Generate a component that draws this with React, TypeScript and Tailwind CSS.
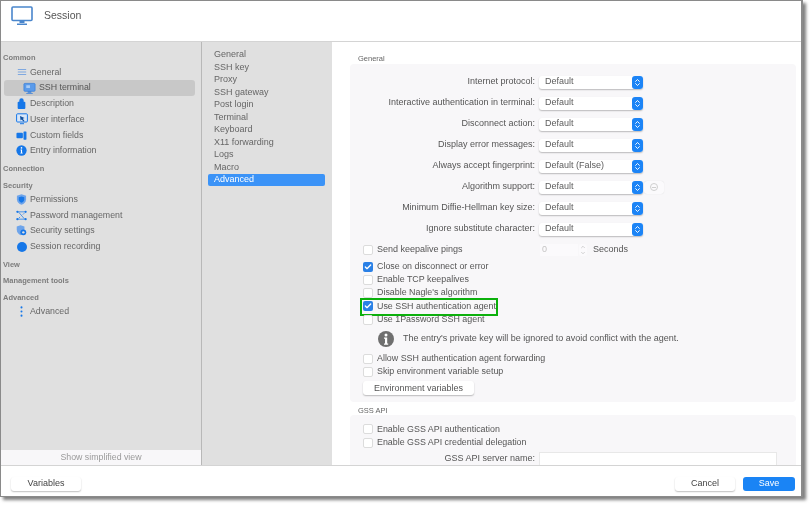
import { Check, ChevronDown, ChevronUp, ChevronsUpDown } from "lucide-react";
import type { ReactNode } from "react";

const BLUE = "#1677e8";

function MenuIcon() {
  return (
    <svg viewBox="0 0 12 12" className="w-[10px] h-[10px]" fill="none" stroke="#7fa8e0" strokeWidth="1.3">
      <path d="M1 3h10M1 6h10M1 9h10" />
    </svg>
  );
}

function TerminalIcon() {
  return (
    <svg viewBox="0 0 14 14" className="w-[13px] h-[13px]">
      <rect x="1" y="1.5" width="12" height="8.5" rx="1" fill="#5b9bea" stroke="#3a7fd8" strokeWidth="0.8" />
      <rect x="3.5" y="3.5" width="4" height="3" fill="#a9ccf5" />
      <path d="M5 10h4v1.5H5zM3.5 12h7v1h-7z" fill="#3a7fd8" />
    </svg>
  );
}

function DescriptionIcon() {
  return (
    <svg viewBox="0 0 12 12" className="w-[11px] h-[11px]" fill={BLUE}>
      <path d="M3.6 4V2.8a2.4 2.4 0 0 1 4.8 0V4h.8c.6 0 1 .4 1 1v6c0 .6-.4 1-1 1H2.8c-.6 0-1-.4-1-1V5c0-.6.4-1 1-1z" />
    </svg>
  );
}

function UiIcon() {
  return (
    <svg viewBox="0 0 12 12" className="w-[12px] h-[12px]">
      <rect x="0.6" y="0.8" width="10.8" height="8.2" rx="1" fill="#d8e6f8" stroke={BLUE} strokeWidth="1" />
      <path d="M4 3l4.5 2-1.7.7L8.5 8 7.3 8.6 5.8 6.4 4.6 7.6z" fill="#10509f" />
      <path d="M4 10.2h4v1H4z" fill={BLUE} />
    </svg>
  );
}

function FieldsIcon() {
  return (
    <svg viewBox="0 0 12 12" className="w-[11px] h-[11px]" fill={BLUE}>
      <rect x="0.5" y="3" width="7" height="6" rx="1" />
      <rect x="8.2" y="1.5" width="3.2" height="9" rx="0.6" />
    </svg>
  );
}

function InfoIcon() {
  return (
    <svg viewBox="0 0 12 12" className="w-[11px] h-[11px]">
      <circle cx="6" cy="6" r="5.6" fill={BLUE} />
      <circle cx="6" cy="3.2" r="0.9" fill="#fff" />
      <path d="M5 5h1.6v3.4h.7v.9H4.8v-.9h.6V5.9H5z" fill="#fff" />
    </svg>
  );
}

function ShieldIcon() {
  return (
    <svg viewBox="0 0 12 12" className="w-[11px] h-[11px]">
      <path d="M6 .4l5 1.6v3.6c0 3-2.2 5-5 6-2.8-1-5-3-5-6V2z" fill="#6ea4ea" />
      <path d="M6 2.6l3 1v2.2c0 1.9-1.3 3.1-3 3.8-1.7-.7-3-1.9-3-3.8V3.6z" fill={BLUE} />
    </svg>
  );
}

function PasswordIcon() {
  return (
    <svg viewBox="0 0 12 12" className="w-[11px] h-[11px]" fill={BLUE} stroke={BLUE}>
      <path d="M2 2h8M2 10h8M3 2.5l6 7M9 3.5L7.5 5M3 9l1.5-1.5" strokeWidth="0.8" fill="none" />
      <circle cx="1.5" cy="2" r="1.2" stroke="none" />
      <circle cx="10.5" cy="2" r="1.2" stroke="none" />
      <circle cx="1.5" cy="10" r="1.2" stroke="none" />
      <circle cx="10.5" cy="10" r="1.2" stroke="none" />
    </svg>
  );
}

function SecurityIcon() {
  return (
    <svg viewBox="0 0 12 12" className="w-[11px] h-[11px]">
      <path d="M5 .3l4.2 1.4v3.2c0 3-1.8 5.2-4.2 6.2C2.600 10.100.8 7.900.8 4.900V1.700z" fill="#6ea4ea" />
      <circle cx="8" cy="8" r="3.2" fill={BLUE} />
      <circle cx="8" cy="8" r="1.3" fill="#e0e0e0" />
    </svg>
  );
}

function RecordIcon() {
  return (
    <svg viewBox="0 0 12 12" className="w-[10px] h-[10px]">
      <circle cx="6" cy="6" r="6" fill={BLUE} />
    </svg>
  );
}

function DotsIcon() {
  return (
    <svg viewBox="0 0 12 12" className="w-[11px] h-[11px]" fill={BLUE}>
      <circle cx="6" cy="1.500" r="1.100" />
      <circle cx="6" cy="6" r="1.100" />
      <circle cx="6" cy="10.500" r="1.100" />
    </svg>
  );
}

function SideItem({ icon, label, selected }: { icon: ReactNode; label: string; selected?: boolean }) {
  return (
    <div className={selected ? "flex items-center h-[15.7px] ml-[3px] mr-[6px] pl-[19px] rounded-[3px] bg-[#c8c8c8]" : "flex items-center h-[15.7px] pl-[14px]"}>
      <span className="w-[13px] flex justify-center shrink-0">{icon}</span>
      <span className={selected ? "ml-[3px] text-[#555]" : "ml-[2px] text-[#666]"}>{label}</span>
    </div>
  );
}

function SideHeading({ label, first }: { label: string; first?: boolean }) {
  return (
    <div className={first ? "h-[13px] flex items-center pl-[2px] text-[7.500px] font-bold text-[#7c7c7c]" : "h-[13px] mt-[3.500px] flex items-center pl-[2px] text-[7.500px] font-bold text-[#7c7c7c]"}>
      {label}
    </div>
  );
}

function Sidebar() {
  return (
    <div className="w-[201px] shrink-0 flex flex-col bg-[#e0e0e0] border-r border-[#b8b8b8] text-[8.800px]">
      <div className="flex-1 pt-[9.500px]">
        <SideHeading first label="Common" />
        <SideItem icon={<MenuIcon />} label="General" />
        <SideItem selected icon={<TerminalIcon />} label="SSH terminal" />
        <SideItem icon={<DescriptionIcon />} label="Description" />
        <SideItem icon={<UiIcon />} label="User interface" />
        <SideItem icon={<FieldsIcon />} label="Custom fields" />
        <SideItem icon={<InfoIcon />} label="Entry information" />
        <SideHeading label="Connection" />
        <SideHeading label="Security" />
        <SideItem icon={<ShieldIcon />} label="Permissions" />
        <SideItem icon={<PasswordIcon />} label="Password management" />
        <SideItem icon={<SecurityIcon />} label="Security settings" />
        <SideItem icon={<RecordIcon />} label="Session recording" />
        <SideHeading label="View" />
        <SideHeading label="Management tools" />
        <SideHeading label="Advanced" />
        <SideItem icon={<DotsIcon />} label="Advanced" />
      </div>
      <div className="h-[15px] flex items-center justify-center bg-[#f8f7f9] text-[#9a9a9a]">Show simplified view</div>
    </div>
  );
}

const tabs = ["General", "SSH key", "Proxy", "SSH gateway", "Post login", "Terminal", "Keyboard", "X11 forwarding", "Logs", "Macro", "Advanced"];

function TabList() {
  return (
    <div className="w-[130px] shrink-0 bg-[#e0e0e0] pt-[6.700px] pl-[6px] pr-[7px] text-[9px] text-[#666]">
      {tabs.map((t) => (
        <div
          key={t}
          className={t === "Advanced" ? "h-[12.500px] flex items-center pl-[6px] rounded-[2px] bg-[#3b93f7] text-white" : "h-[12.500px] flex items-center pl-[6px]"}
        >
          {t}
        </div>
      ))}
    </div>
  );
}

function SelectRow({ label, value = "Default", extra }: { label: string; value?: string; extra?: boolean }) {
  return (
    <div className="h-[21px] flex items-center">
      <div className="w-[185px] text-right text-[#555]">{label}</div>
      <div className="ml-[4px] w-[104px] h-[13px] flex items-center justify-between rounded-[3px] bg-white shadow-[0_1px_1.500px_rgba(0,0,0,0.25)] pl-[6px] text-[#5c5c5c]">
        <span>{value}</span>
        <span className="w-[11px] h-[13px] flex items-center justify-center rounded-[3px] bg-[#1c84f6] text-white">
          <ChevronsUpDown size={9} strokeWidth={2.5} />
        </span>
      </div>
      {extra && (
        <div className="ml-[1px] w-[20px] h-[13px] flex items-center justify-center rounded-[3px] bg-[#fbfafc] shadow-[0_0_1px_rgba(0,0,0,0.15)]">
          <span className="w-[8px] h-[8px] rounded-full border border-[#cfcfcf] flex items-center justify-center">
            <span className="w-[4px] h-px bg-[#cfcfcf]" />
          </span>
        </div>
      )}
    </div>
  );
}

function CheckRow({ label, checked, highlight, className = "" }: { label: string; checked?: boolean; highlight?: boolean; className?: string }) {
  return (
    <div className={`relative h-[13.200px] flex items-center text-[8.900px] text-[#555] ${className}`}>
      <span
        className={
          checked
            ? "-ml-px w-[10px] h-[10px] rounded-[2px] bg-[#2a80e6] flex items-center justify-center text-white shrink-0"
            : "-ml-px w-[10px] h-[10px] rounded-[2px] bg-white border border-[#dcdcdc] shrink-0"
        }
      >
        {checked && <Check size={8} strokeWidth={4} />}
      </span>
      <span className="ml-[4px]">{label}</span>
      {highlight && <span className="absolute left-[-4px] top-[-2px] w-[138px] h-[18px] border-2 border-[#0cb00c]" />}
    </div>
  );
}

function MainPane() {
  return (
    <div className="flex-1 min-w-0 bg-white overflow-hidden pt-[12px] pl-[18px] pr-[5px] text-[9px]">
      <div className="h-[10px] flex items-center pl-[8px] text-[7.500px] text-[#666]">General</div>
      <div className="rounded-[4px] bg-[#f8f7f9] pt-[7.500px] pb-[7px]">
        <SelectRow label="Internet protocol:" />
        <SelectRow label="Interactive authentication in terminal:" />
        <SelectRow label="Disconnect action:" />
        <SelectRow label="Display error messages:" />
        <SelectRow label="Always accept fingerprint:" value="Default (False)" />
        <SelectRow label="Algorithm support:" extra />
        <SelectRow label="Minimum Diffie-Hellman key size:" />
        <SelectRow label="Ignore substitute character:" />
        <div className="pl-[14px]">
          <div className="relative mt-[3.800px] h-[13.200px] flex items-center text-[#555]">
            <span className="-ml-px w-[10px] h-[10px] rounded-[2px] bg-white border border-[#dcdcdc] shrink-0" />
            <span className="ml-[4px] w-[163px]">Send keepalive pings</span>
            <span className="w-[38px] h-[12px] flex items-center pl-[2px] bg-[#fbfafc] text-[#c4c4c4]">0</span>
            <span className="ml-[1px] w-[8px] h-[12px] flex flex-col items-center justify-center rounded-[2px] bg-[#fbfafc] text-[#a8a8a8]">
              <ChevronUp size={6} strokeWidth={2} />
              <ChevronDown size={6} strokeWidth={2} />
            </span>
            <span className="ml-[6px]">Seconds</span>
          </div>
          <CheckRow label="Close on disconnect or error" checked className="mt-[3.700px]" />
          <CheckRow label="Enable TCP keepalives" />
          <CheckRow label="Disable Nagle's algorithm" />
          <CheckRow label="Use SSH authentication agent" checked highlight />
          <CheckRow label="Use 1Password SSH agent" />
          <div className="mt-[5px] h-[16px] flex items-center pl-[14px] text-[#555]">
            <svg viewBox="0 0 16 16" className="w-[16px] h-[16px]">
              <circle cx="8" cy="8" r="8" fill="#6f6f6f" />
              <circle cx="8" cy="4" r="1.500" fill="#fff" />
              <path d="M6 6.500h3.200v6h1v1.200H6v-1.200h1v-4.800H6z" fill="#fff" />
            </svg>
            <span className="ml-[9px]">The entry's private key will be ignored to avoid conflict with the agent.</span>
          </div>
          <CheckRow label="Allow SSH authentication agent forwarding" className="mt-[5px]" />
          <CheckRow label="Skip environment variable setup" />
          <button className="mt-[3px] w-[111px] h-[14px] flex items-center justify-center rounded-[3px] bg-white shadow-[0_1px_1.500px_rgba(0,0,0,0.25)] text-[#555] -ml-px">
            Environment variables
          </button>
        </div>
      </div>
      <div className="mt-[3px] h-[10px] flex items-center pl-[8px] text-[7.500px] text-[#666]">GSS API</div>
      <div className="rounded-[4px] bg-[#f8f7f9] pt-[7.300px] pl-[14px] h-[60px]">
        <CheckRow label="Enable GSS API authentication" />
        <CheckRow label="Enable GSS API credential delegation" />
        <div className="mt-[3px] flex items-start -ml-[14px]">
          <div className="w-[185px] h-[13px] flex items-center justify-end text-[#555]">GSS API server name:</div>
          <div className="ml-[4px] w-[238px] h-[20px] bg-white border border-[#e8e8e8]" />
        </div>
      </div>
    </div>
  );
}

export default function App() {
  return (
    <div className="w-[812px] h-[507px] bg-white font-['Liberation_Sans',Arial,sans-serif] overflow-hidden blur-[0.5px]">
      <div className="w-[803px] h-[497px] flex flex-col bg-white border border-[#8a8a8a] border-r-[2px] shadow-[3px_3px_3px_rgba(0,0,0,0.5)]">
        <div className="h-[41px] shrink-0 flex items-center border-b border-[#d4d4d4] pl-[10px] pb-[10px]">
          <svg viewBox="0 0 22 20" className="w-[22px] h-[20px]" fill="none">
            <rect x="1" y="1" width="20" height="13.500" rx="1" stroke="#4a86cc" strokeWidth="1.600" />
            <path d="M8.500 15h5v2h-5zM6 17.500h10v1.500H6z" fill="#4a86cc" />
          </svg>
          <span className="ml-[11px] text-[10.500px] text-[#555]">Session</span>
        </div>
        <div className="flex-1 min-h-0 flex">
          <Sidebar />
          <TabList />
          <MainPane />
        </div>
        <div className="h-[31px] shrink-0 flex items-start justify-between border-t border-[#d4d4d4] pt-[11px] pl-[10px] pr-[6px] text-[9px]">
          <button className="w-[70px] h-[14px] flex items-center justify-center rounded-[3px] bg-white shadow-[0_1px_1.500px_rgba(0,0,0,0.25)] text-[#444]">Variables</button>
          <div className="flex gap-[8px]">
            <button className="w-[60px] h-[14px] flex items-center justify-center rounded-[3px] bg-white shadow-[0_1px_1.500px_rgba(0,0,0,0.25)] text-[#444]">Cancel</button>
            <button className="w-[52px] h-[14px] flex items-center justify-center rounded-[3px] bg-[#1a84f5] text-white">Save</button>
          </div>
        </div>
      </div>
    </div>
  );
}
